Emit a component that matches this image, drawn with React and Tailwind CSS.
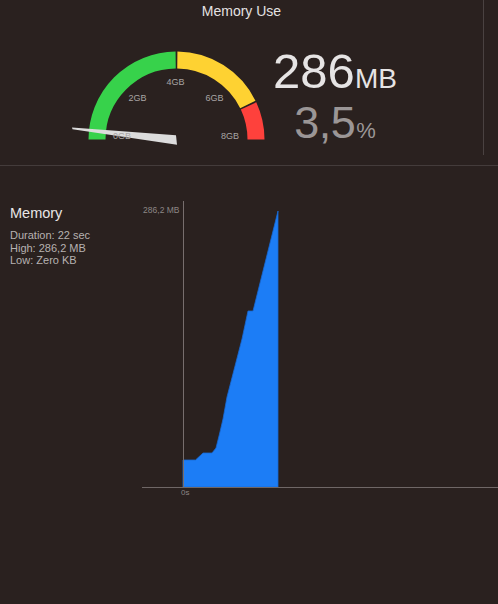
import React from 'react';

const font = { fontFamily: '"Liberation Sans", Arial, sans-serif' };

// gauge geometry, in page coordinates (svg viewBox starts at 66,48)
const CX = 176.5;
const CY = 139.5;
const R = 79.5;

function arcPath(fromDeg, toDeg) {
  const p = (deg) => {
    const a = (deg * Math.PI) / 180;
    return [CX + R * Math.cos(a), CY - R * Math.sin(a)];
  };
  const [x1, y1] = p(fromDeg);
  const [x2, y2] = p(toDeg);
  return `M ${x1} ${y1} A ${R} ${R} 0 0 1 ${x2} ${y2}`;
}

function Gauge() {
  const labels = [
    { t: '0GB', x: 113, y: 138.5 },
    { t: '2GB', x: 128.5, y: 101 },
    { t: '4GB', x: 166.5, y: 84.5 },
    { t: '6GB', x: 205.5, y: 101 },
    { t: '8GB', x: 221, y: 138.5 },
  ];
  return (
    <svg width="204" height="100" viewBox="66 48 204 100" className="mt-[1px] shrink-0">
      <path d={arcPath(180, 90.6)} stroke="#37d24b" strokeWidth="17" fill="none" />
      <path d={arcPath(89.4, 26.2)} stroke="#fed232" strokeWidth="17" fill="none" />
      <path d={arcPath(25, 0)} stroke="#fe413c" strokeWidth="17" fill="none" />
      <polygon points="72,127.5 72.5,129.2 177,144.8 176,135.2" fill="#dcdcdc" />
      {labels.map((l) => (
        <text key={l.t} x={l.x} y={l.y} fontSize="9" fill="#a9a5a4" style={font}>
          {l.t}
        </text>
      ))}
    </svg>
  );
}

function Chart() {
  const area =
    '183,488 183,461 195.5,461 203,454 212,454 216,449 219.5,435 223,420 227,398 242,340 248,312 253,312 278,212 278,488';
  return (
    <svg width="358" height="300" viewBox="140 200 358 300" className="mt-[33px] shrink-0">
      <polygon points={area} fill="#1c7df6" stroke="#176ad6" strokeWidth="0.8" />
      <line x1="183.5" y1="202" x2="183.5" y2="488" stroke="#776e6d" strokeWidth="1" />
      <line x1="142" y1="488.5" x2="498" y2="488.5" stroke="#6f6766" strokeWidth="1" />
      <text x="179.5" y="214" fontSize="8.5" fill="#8c8685" textAnchor="end" style={font}>
        286,2 MB
      </text>
      <text x="181" y="495.5" fontSize="8" fill="#8c8685" style={font}>
        0s
      </text>
    </svg>
  );
}

export default function App() {
  return (
    <div className="w-[498px] h-[604px] overflow-hidden bg-[#2a211f]" style={font}>
      {/* top: gauge + figures */}
      <div className="flex h-[166px] border-b border-[#443c3b]">
        <div className="w-[483px]">
          <div className="pt-[3px] text-center text-[14px] leading-[16px] text-[#e4e2e2]">
            Memory Use
          </div>
          <div className="flex items-start mt-[28px] pl-[66px]">
            <Gauge />
            <div className="w-[130px] flex flex-col items-center">
              <div className="flex items-baseline leading-none text-[#e6e4e4]">
                <span className="text-[49px]">286</span>
                <span className="text-[28px]">MB</span>
              </div>
              <div className="flex items-baseline leading-none mt-[4px] text-[#9b9696]">
                <span className="text-[45px] tracking-[-0.5px]">3,5</span>
                <span className="text-[22px] ml-[1px]">%</span>
              </div>
            </div>
          </div>
        </div>
        <div className="w-px h-[155px] bg-[#4a4241]" />
      </div>

      {/* bottom: memory chart */}
      <div className="flex">
        <div className="w-[140px] shrink-0 pl-[10px] pt-[39px]">
          <div className="text-[14.5px] leading-[16px] text-[#e8e6e6]">Memory</div>
          <div className="mt-[8px] text-[11px] leading-[12.5px] text-[#b7b2b1]">
            <div>Duration: 22 sec</div>
            <div>High: 286,2 MB</div>
            <div>Low: Zero KB</div>
          </div>
        </div>
        <Chart />
      </div>
    </div>
  );
}
